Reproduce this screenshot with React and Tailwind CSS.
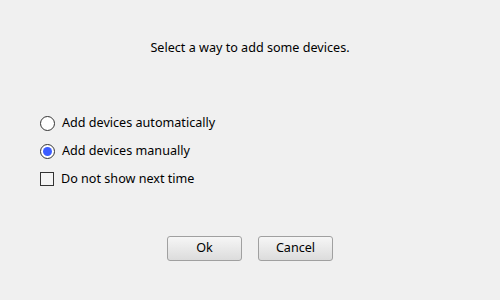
export default function App() {
  return (
    <div className="w-[500px] h-[300px] bg-[#f0f0f0] flex flex-col text-[12.6px] text-black font-['Noto_Sans',sans-serif]">
      <p className="mt-[39px] text-center leading-[18px]">Select a way to add some devices.</p>

      <div className="mt-[57px] ml-[40px] flex flex-col gap-[10px]">
        <label className="flex items-center gap-[7px] h-[18px]">
          <span className="w-[15px] h-[15px] rounded-full border border-[#333] bg-white" />
          <span>Add devices automatically</span>
        </label>
        <label className="flex items-center gap-[7px] h-[18px]">
          <span className="w-[15px] h-[15px] rounded-full border border-[#333] bg-white flex items-center justify-center">
            <span className="w-[9px] h-[9px] rounded-full bg-[#3b5cff]" />
          </span>
          <span>Add devices manually</span>
        </label>
        <label className="flex items-center gap-[7px] h-[18px]">
          <span className="w-[14px] h-[14px] border border-[#333] bg-[#f4f4f4]" />
          <span>Do not show next time</span>
        </label>
      </div>

      <div className="mt-[48px] flex justify-center gap-[16px]">
        <button className="w-[75px] h-[25px] rounded-[3px] border border-[#a0a0a0] bg-gradient-to-b from-[#f6f6f6] to-[#dcdcdc] leading-none">
          Ok
        </button>
        <button className="w-[75px] h-[25px] rounded-[3px] border border-[#a0a0a0] bg-gradient-to-b from-[#f6f6f6] to-[#dcdcdc] leading-none">
          Cancel
        </button>
      </div>
    </div>
  );
}
